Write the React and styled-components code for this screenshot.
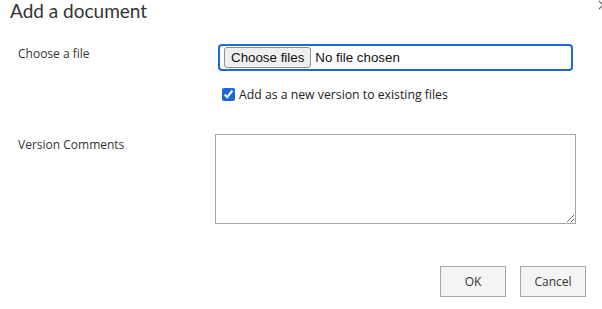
import React from "react";
import styled, { createGlobalStyle } from "styled-components";

const Global = createGlobalStyle`
  html, body {
    margin: 0;
    padding: 0;
    background: #fff;
    overflow: hidden;
  }
  body {
    font-family: "Open Sans", "Noto Sans", sans-serif;
    color: #333;
  }
`;

const Dialog = styled.div`
  position: relative;
  width: 602px;
  height: 309px;
  box-sizing: border-box;
  padding: 0 16px 0 10px;
  display: flex;
  flex-direction: column;
`;

const Title = styled.h1`
  margin: 0;
  font-family: Lato, "Open Sans", sans-serif;
  font-size: 19px;
  font-weight: 400;
  line-height: 22px;
  color: #333;
`;

const CloseButton = styled.button`
  position: absolute;
  top: 0;
  left: 598px;
  width: 10px;
  height: 10px;
  padding: 0;
  border: 0;
  background: none;
  display: block;
`;

const Form = styled.div`
  display: grid;
  grid-template-columns: 197px 1fr;
  padding-left: 8px;
  margin-top: 22px;
`;

const Label = styled.div`
  font-size: 12px;
  line-height: 17px;
  color: #333;
  padding-top: ${({ $top }) => $top || 0}px;
  margin-top: ${({ $gap }) => $gap || 0}px;
`;

const Field = styled.div`
  display: flex;
  flex-direction: column;
  align-items: flex-start;
  margin-top: ${({ $gap }) => $gap || 0}px;
`;

const FileBox = styled.div`
  margin-left: 3px;
  width: 355px;
  height: 27px;
  box-sizing: border-box;
  border: 2px solid #1b6ad4;
  border-radius: 4px;
  display: flex;
  align-items: center;
  padding: 0 4px;
  gap: 4px;
  font-family: "Liberation Sans", Arial, sans-serif;
  font-size: 13.33px;
  color: #111;
`;

const FileButton = styled.span`
  height: 21px;
  box-sizing: border-box;
  padding: 0 6px;
  display: flex;
  align-items: center;
  background: #efefef;
  border: 1px solid #8f8f8f;
  border-radius: 3px;
`;

const CheckRow = styled.label`
  display: flex;
  align-items: center;
  margin: 15px 0 0 7px;
  font-size: 12.25px;
  color: #222;
`;

const Check = styled.input`
  width: 13px;
  height: 13px;
  margin: 0 4px 0 0;
  accent-color: #1b6ad4;
`;

const Comments = styled.textarea`
  width: 361px;
  height: 90px;
  box-sizing: border-box;
  margin: 0;
  border: 1px solid #a6a6a6;
  border-radius: 0;
  outline: none;
`;

const Footer = styled.div`
  display: flex;
  justify-content: flex-end;
  gap: 14px;
  margin-top: 42px;
`;

const Button = styled.button`
  width: 66px;
  height: 31px;
  box-sizing: border-box;
  border: 1px solid #a6a6a6;
  background: #f4f4f4;
  font-family: "Open Sans", "Noto Sans", sans-serif;
  font-size: 12px;
  color: #333;
  padding: 0;
`;

export default function App() {
  return (
    <Dialog>
      <Global />
      <Title>Add a document</Title>
      <CloseButton aria-label="Close">
        <svg width="10" height="10" viewBox="0 0 10 10" style={{ display: "block", overflow: "visible" }}>
          <path d="M1 1 L9 9 M9 1 L1 9" stroke="#666" strokeWidth="1.2" fill="none" />
        </svg>
      </CloseButton>
      <Form>
        <Label $top={1}>Choose a file</Label>
        <Field>
          <FileBox>
            <FileButton>Choose files</FileButton>
            <span>No file chosen</span>
          </FileBox>
          <CheckRow>
            <Check type="checkbox" defaultChecked />
            Add as a new version to existing files
          </CheckRow>
        </Field>
        <Label $top={2} $gap={31}>Version Comments</Label>
        <Field $gap={31}>
          <Comments />
        </Field>
      </Form>
      <Footer>
        <Button>OK</Button>
        <Button>Cancel</Button>
      </Footer>
    </Dialog>
  );
}
